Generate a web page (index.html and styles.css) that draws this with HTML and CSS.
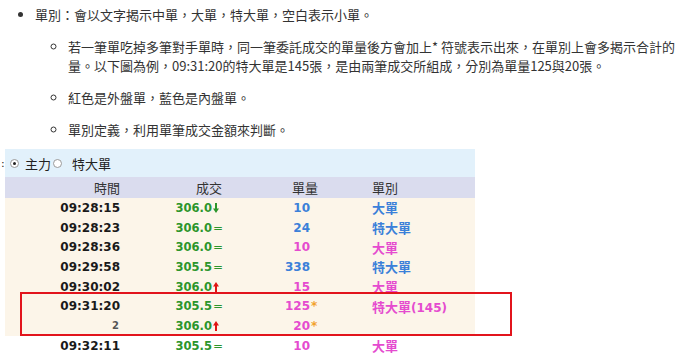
FILE: index.html
```html
<!DOCTYPE html>
<html lang="zh-Hant">
<head>
<meta charset="utf-8">
<title>單別說明</title>
<link rel="stylesheet" href="styles.css">
</head>
<body>
<ul class="notes">
  <li>
    <p class="line">單別：會以文字揭示中單，大單，特大單，空白表示小單。</p>
    <ul class="sub">
      <li><p class="line">若一筆單吃掉多筆對手單時，同一筆委託成交的單量後方會加上* 符號表示出來，在單別上會多揭示合計的量。以下圖為例，09:31:20的特大單是145張，是由兩筆成交所組成，分別為單量125與20張。</p></li>
      <li><p class="line">紅色是外盤單，藍色是內盤單。</p></li>
      <li><p class="line">單別定義，利用單筆成交金額來判斷。</p></li>
    </ul>
  </li>
</ul>

<div class="panel">
  <div class="band">
    <span class="cut">:</span>
    <span class="radio on"></span><span class="opt">主力</span>
    <span class="radio"></span><span class="opt opt2">特大單</span>
  </div>
  <div class="row head">
    <div class="c1">時間</div><div class="c2">成交</div><div class="c3">單量</div><div class="c4">單別</div>
  </div>
  <div class="body">
    <div class="row">
      <div class="c1 t">09:28:15</div>
      <div class="c2 p">306.0<span class="sfx"><svg class="arr" viewBox="0 0 6 10" width="6" height="10"><path d="M2 0h2v5.5h2L3 10 0 5.5h2z" fill="#2c952c"/></svg></span></div>
      <div class="c3 n blue">10<span class="st"></span></div>
      <div class="c4 k blue">大單</div>
    </div>
    <div class="row">
      <div class="c1 t">09:28:23</div>
      <div class="c2 p">306.0<span class="sfx">=</span></div>
      <div class="c3 n blue">24<span class="st"></span></div>
      <div class="c4 k blue">特大單</div>
    </div>
    <div class="row">
      <div class="c1 t">09:28:36</div>
      <div class="c2 p">306.0<span class="sfx">=</span></div>
      <div class="c3 n pink">10<span class="st"></span></div>
      <div class="c4 k pink">大單</div>
    </div>
    <div class="row">
      <div class="c1 t">09:29:58</div>
      <div class="c2 p">305.5<span class="sfx">=</span></div>
      <div class="c3 n blue">338<span class="st"></span></div>
      <div class="c4 k blue">特大單</div>
    </div>
    <div class="row">
      <div class="c1 t">09:30:02</div>
      <div class="c2 p">306.0<span class="sfx"><svg class="arr" viewBox="0 0 6 10" width="6" height="10"><path d="M2 10h2V4.5h2L3 0 0 4.5h2z" fill="#e01414"/></svg></span></div>
      <div class="c3 n pink">15<span class="st"></span></div>
      <div class="c4 k pink">大單</div>
    </div>
    <div class="row">
      <div class="c1 t">09:31:20</div>
      <div class="c2 p">305.5<span class="sfx">=</span></div>
      <div class="c3 n pink">125<span class="st">*</span></div>
      <div class="c4 k pink">特大單<span class="num">(145)</span></div>
    </div>
    <div class="row">
      <div class="c1 t small">2</div>
      <div class="c2 p">306.0<span class="sfx"><svg class="arr" viewBox="0 0 6 10" width="6" height="10"><path d="M2 10h2V4.5h2L3 0 0 4.5h2z" fill="#e01414"/></svg></span></div>
      <div class="c3 n pink">20<span class="st">*</span></div>
      <div class="c4 k pink"></div>
    </div>
  </div>
  <div class="row plain">
    <div class="c1 t">09:32:11</div>
    <div class="c2 p">305.5<span class="sfx">=</span></div>
    <div class="c3 n pink">10<span class="st"></span></div>
    <div class="c4 k pink">大單</div>
  </div>
  <div class="mark"></div>
</div>
</body>
</html>
```

FILE: styles.css
```css
html, body {
  margin: 0;
  padding: 0;
  background: #ffffff;
}

body {
  font-family: "Noto Sans CJK TC", "Noto Sans", sans-serif;
  font-size: 13px;
  color: #333333;
  width: 690px;
  height: 354px;
  overflow: hidden;
}

.notes {
  margin: 5px 6px 0 0;
  padding-left: 35px;
  list-style: disc;
}

.line {
  margin: 0;
  line-height: 19px;
}

.sub {
  margin: 13px 0 0 0;
  padding-left: 33px;
  list-style: circle;
}

.sub li {
  margin-bottom: 13px;
}

.sub li:last-child {
  margin-bottom: 0;
}

.panel {
  position: relative;
  margin: 10px 0 0 5px;
  width: 470px;
}

.band {
  height: 28px;
  background: #e2f1fb;
  display: flex;
  align-items: center;
  color: #222;
}

.cut {
  margin-left: -4px;
  width: 6px;
  font-family: "DejaVu Sans", sans-serif;
  font-size: 11px;
}

.radio {
  width: 7px;
  height: 7px;
  border: 1px solid #9a9a9a;
  border-radius: 50%;
  background: #fff;
  display: flex;
  align-items: center;
  justify-content: center;
  flex: none;
}

.radio.on::after {
  content: "";
  width: 3px;
  height: 3px;
  border-radius: 50%;
  background: #222;
}

.cut + .radio {
  margin-left: 3px;
}

.opt {
  margin: 0 2px 0 6px;
}

.opt2 {
  margin-left: 10px;
}

.row {
  display: grid;
  grid-template-columns: 115px 102px 96px 1fr;
  height: 19.7px;
  align-items: center;
}

.head {
  height: 21px;
  background: #dadcee;
  color: #333;
}

.c1, .c2, .c3 {
  text-align: right;
}

.c4 {
  padding-left: 54px;
}

.body {
  background: #fcf5e9;
}

.t, .p, .n, .num {
  font-family: "DejaVu Sans", Verdana, sans-serif;
  font-weight: bold;
  font-size: 12px;
}

.t {
  color: #1a1a1a;
}

.t.small {
  font-size: 10px;
  color: #555;
  padding-right: 1px;
}

.p {
  color: #2c952c;
  font-size: 11.5px;
  display: flex;
  justify-content: flex-end;
  align-items: center;
}

.sfx {
  display: inline-flex;
  align-items: center;
  width: 10px;
  padding-left: 1px;
  box-sizing: border-box;
  font-weight: normal;
  font-size: 12px;
}

.arr {
  display: block;
}

.n {
  display: flex;
  justify-content: flex-end;
}

.st {
  width: 8px;
  text-align: left;
  color: #f2a12c;
  padding-left: 1px;
  box-sizing: border-box;
}

.k {
  font-weight: bold;
  font-size: 13px;
}

.num {
  font-size: 12px;
}

.blue {
  color: #3b80d9;
}

.pink {
  color: #e54bcf;
}

.mark {
  position: absolute;
  left: 15px;
  top: 143px;
  width: 492px;
  height: 44px;
  box-sizing: border-box;
  border: 2px solid #e2141c;
}
```
